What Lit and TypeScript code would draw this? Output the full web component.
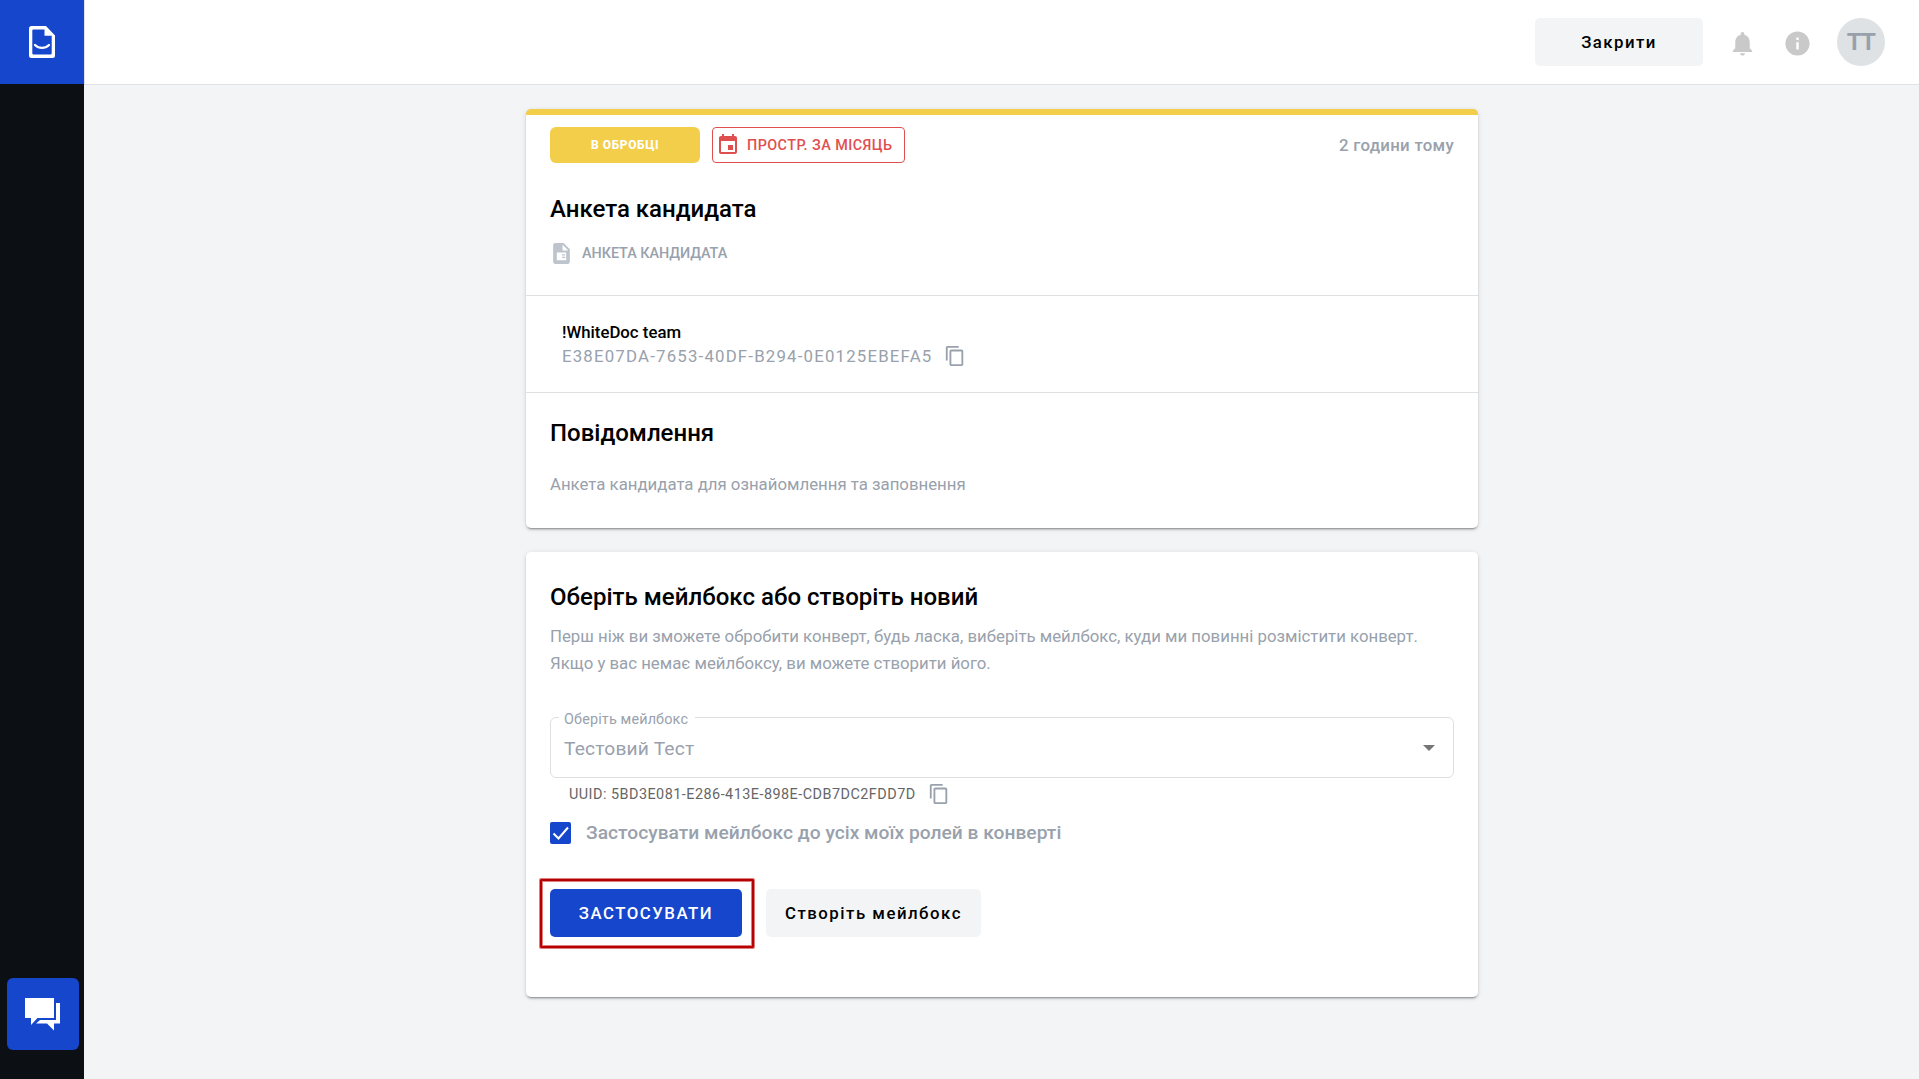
import { LitElement, html, css } from "lit";
import { customElement } from "lit/decorators.js";

@customElement("copy-icon")
class CopyIcon extends LitElement {
  static styles = css`
    :host { display: block; flex: none; width: 22px; height: 22px; color: #98a1ac; }
    svg { display: block; width: 100%; height: 100%; fill: currentColor; }
  `;
  render() {
    return html`<svg viewBox="0 0 24 24"><path d="M16 1H4c-1.1 0-2 .9-2 2v14h2V3h12V1zm3 4H8c-1.1 0-2 .9-2 2v14c0 1.1.9 2 2 2h11c1.1 0 2-.9 2-2V7c0-1.1-.9-2-2-2zm0 16H8V7h11v14z"/></svg>`;
  }
}

@customElement("side-bar")
class SideBar extends LitElement {
  static styles = css`
    :host { display: flex; flex-direction: column; justify-content: space-between; width: 84px; flex: none; background: #0c1014; }
    .logo { height: 84px; background: #1546cc; display: grid; place-items: center; }
    .logo svg { width: 26px; height: 32px; display: block; }
    .chat { width: 72px; height: 72px; margin: 0 0 29px 7px; border-radius: 6px; background: #1546cc; }
    .chat svg { width: 72px; height: 72px; display: block; }
  `;
  render() {
    return html`
      <div class="logo">
        <svg viewBox="0 0 26 32">
          <path fill="#fff" fill-rule="evenodd" d="M2.500 0H17l9 9.500v20a2.500 2.500 0 0 1-2.500 2.500h-21A2.500 2.500 0 0 1 0 29.500v-27A2.500 2.500 0 0 1 2.500 0zM4.500 3.400A1.200 1.200 0 0 0 3.300 4.600v22.600A1.200 1.200 0 0 0 4.500 28.400h17a1.200 1.200 0 0 0 1.200-1.200V9.800h-7.200V3.400z"/>
          <path fill="none" stroke="#fff" stroke-width="2.300" stroke-linecap="round" d="M6 19c4 3.900 10 3.900 14 0"/>
        </svg>
      </div>
      <div class="chat">
        <svg viewBox="0 0 72 72" fill="#fff">
          <path d="M18 20h29v20H30.500L24 47v-7h-6z"/>
          <path d="M49 25h4v20.500h-6V52.500L40 45.500H29l4-3.500h16z"/>
        </svg>
      </div>`;
  }
}

@customElement("top-bar")
class TopBar extends LitElement {
  static styles = css`
    :host { display: flex; align-items: center; justify-content: flex-end; box-sizing: border-box; height: 85px; padding-right: 34px; background: #fff; border-bottom: 1px solid #dee1e5; border-left: 1px solid #dee1e5; }
    .close { width: 168px; height: 48px; border-radius: 5px; background: #f3f4f6; font-size: 16.8px; font-weight: 500; letter-spacing: 1.45px; display: grid; place-items: center; color: #000; }
    .icon { width: 29px; height: 29px; fill: #c9c9c9; margin-top: 3px; }
    .bell { margin-left: 25px; }
    .info { margin-left: 26px; }
    .avatar { margin-left: 25px; width: 48px; height: 48px; border-radius: 50%; background: #dee2e5; color: #98a1ab; font-family: "Liberation Sans", sans-serif; font-size: 24px; font-weight: 700; letter-spacing: -.6px; display: grid; place-items: center; }
  `;
  render() {
    return html`
      <div class="close">Закрити</div>
      <svg class="icon bell" viewBox="0 0 24 24"><path d="M12 22c1.100 0 2-.9 2-2h-4c0 1.100.89 2 2 2zm6-6v-5c0-3.070-1.640-5.640-4.500-6.320V4c0-.83-.67-1.500-1.500-1.500s-1.500.67-1.500 1.500v.68C7.630 5.360 6 7.920 6 11v5l-2 2v1h16v-1l-2-2z"/></svg>
      <svg class="icon info" viewBox="0 0 24 24"><path d="M12 2C6.480 2 2 6.480 2 12s4.480 10 10 10 10-4.480 10-10S17.520 2 12 2zm1 15h-2v-6h2v6zm0-8h-2V7h2v2z"/></svg>
      <div class="avatar">TT</div>`;
  }
}

@customElement("envelope-card")
class EnvelopeCard extends LitElement {
  static styles = css`
    :host { display: block; box-sizing: border-box; height: 419px; border-radius: 5px; background: #fff; overflow: hidden; border-top: 6px solid #f3ce4a; box-shadow: 0 3px 1px -2px rgba(0,0,0,.2), 0 2px 2px rgba(0,0,0,.14), 0 1px 5px rgba(0,0,0,.12); }
    .head { padding: 12px 24px 0; height: 168px; border-bottom: 1px solid #dee1e3; }
    .chips { display: flex; align-items: center; gap: 12px; height: 36px; }
    .status { width: 150px; height: 36px; border-radius: 6px; background: #f3ce4a; color: #fff; font-size: 12px; font-weight: 800; letter-spacing: .6px; display: grid; place-items: center; }
    .due { box-sizing: border-box; width: 193px; height: 36px; border: 1px solid #e04f50; border-radius: 4px; color: #e04f50; display: flex; align-items: center; font-size: 14.4px; font-weight: 500; letter-spacing: .43px; padding-left: 3px; gap: 7px; }
    .due svg { width: 24px; height: 24px; fill: currentColor; }
    .ago { margin-left: auto; color: #98a1ac; font-size: 16.8px; font-weight: 500; letter-spacing: .3px; }
    .title { font-size: 24px; font-weight: 500; line-height: 30px; }
    .head .title { margin-top: 31px; }
    .kind { display: flex; align-items: center; gap: 8px; margin: 17px 0 0 -1px; height: 24px; color: #98a1ac; font-size: 14.4px; font-weight: 500; letter-spacing: -.05px; }
    .kind svg { width: 25px; height: 25px; fill: #bdc4cc; }
    .team { box-sizing: border-box; height: 97px; padding: 24px 36px 0; border-bottom: 1px solid #dee1e3; }
    .name { font-size: 16.8px; font-weight: 500; line-height: 24px; }
    .uuid { display: flex; align-items: center; gap: 12px; height: 24px; color: #98a1ac; font-size: 16.8px; letter-spacing: 1.2px; }
    .message { padding: 25px 24px 0; }
    .body { margin-top: 24px; line-height: 24px; font-size: 16.8px; color: #98a1ac; }
  `;
  render() {
    return html`
      <div class="head">
        <div class="chips">
          <div class="status">В ОБРОБЦІ</div>
          <div class="due">
            <svg viewBox="0 0 24 24"><path d="M17 12h-5v5h5v-5zM16 1v2H8V1H6v2H5c-1.110 0-1.990.9-1.990 2L3 19c0 1.100.89 2 2 2h14c1.100 0 2-.9 2-2V5c0-1.100-.9-2-2-2h-1V1h-2zm3 18H5V8h14v11z"/></svg>
            <span>ПРОСТР. ЗА МІСЯЦЬ</span>
          </div>
          <div class="ago">2 години тому</div>
        </div>
        <div class="title">Анкета кандидата</div>
        <div class="kind">
          <svg viewBox="0 0 24 24"><path fill-rule="evenodd" d="M6 2h8l6 6v12c0 1.100-.9 2-2 2H6c-1.100 0-2-.9-2-2V4c0-1.100.9-2 2-2zm7 1.500V9h5.500zM7.500 11v7.500h9V11zM12.500 12.700h3v1.200h-3zM12.500 15.200h3v1.200h-3z"/></svg>
          <span>АНКЕТА КАНДИДАТА</span>
        </div>
      </div>
      <div class="team">
        <div class="name">!WhiteDoc team</div>
        <div class="uuid"><span>E38E07DA-7653-40DF-B294-0E0125EBEFA5</span><copy-icon></copy-icon></div>
      </div>
      <div class="message">
        <div class="title">Повідомлення</div>
        <div class="body">Анкета кандидата для ознайомлення та заповнення</div>
      </div>`;
  }
}

@customElement("mailbox-card")
class MailboxCard extends LitElement {
  static styles = css`
    :host { display: block; box-sizing: border-box; height: 445px; padding: 30px 24px 0; border-radius: 5px; background: #fff; box-shadow: 0 3px 1px -2px rgba(0,0,0,.2), 0 2px 2px rgba(0,0,0,.14), 0 1px 5px rgba(0,0,0,.12); }
    .title { font-size: 24px; font-weight: 500; line-height: 30px; letter-spacing: .02px; }
    .text { margin-top: 11px; font-size: 16.8px; line-height: 27px; color: #98a1ac; white-space: nowrap; }
    .select { margin: 40px 0 0; position: relative; box-sizing: border-box; height: 61px; border: 1px solid #dedfe1; border-radius: 6px; display: flex; align-items: center; justify-content: space-between; padding: 0 18px 0 13px; color: #98a1ac; font-size: 19.2px; letter-spacing: .18px; }
    .value { padding-top: 2px; }
    .label { position: absolute; left: 8px; top: -8px; padding: 0 7px 0 5px; line-height: 20px; background: #fff; font-size: 14.4px; letter-spacing: .15px; }
    .arrow { width: 12px; height: 6px; fill: #757575; }
    .uuid { display: flex; align-items: center; gap: 12px; height: 22px; margin-top: 5px; padding-left: 19px; color: #666; font-size: 14.4px; letter-spacing: .48px; }
    .check { display: flex; align-items: center; gap: 15px; height: 24px; margin-top: 16px; color: #98a1ac; font-size: 19.2px; font-weight: 500; line-height: 22px; letter-spacing: .02px; }
    .box { width: 21px; height: 22px; border-radius: 2px; background: #1546cc; }
    .box svg { display: block; width: 21px; height: 22px; fill: none; stroke: #fff; stroke-width: 2; }
    .actions { display: flex; gap: 24px; margin-top: 44px; }
    .button { height: 48px; border-radius: 5px; display: grid; place-items: center; font-size: 16.8px; font-weight: 500; letter-spacing: 1.5px; }
    .apply { width: 192px; background: #1546cc; color: #fff; position: relative; }
    .apply::after { content: ""; position: absolute; inset: -10px -12px -11px -10px; border: 2px solid #b80000; box-shadow: 0 0 0 1px rgba(184,0,0,.5), inset 0 0 0 1px rgba(184,0,0,.5); border-radius: 1px; }
    .create { width: 215px; background: #f3f4f6; color: #000; }
  `;
  render() {
    return html`
      <div class="title">Оберіть мейлбокс або створіть новий</div>
      <div class="text">Перш ніж ви зможете обробити конверт, будь ласка, виберіть мейлбокс, куди ми повинні розмістити конверт.<br>Якщо у вас немає мейлбоксу, ви можете створити його.</div>
      <div class="select">
        <span class="label">Оберіть мейлбокс</span>
        <span class="value">Тестовий Тест</span>
        <svg class="arrow" viewBox="0 0 12 6"><path d="M0 0h12L6 6z"/></svg>
      </div>
      <div class="uuid"><span>UUID: 5BD3E081-E286-413E-898E-CDB7DC2FDD7D</span><copy-icon></copy-icon></div>
      <div class="check">
        <div class="box"><svg viewBox="0 0 21 22"><path d="M3.500 11.500l5 5L18 5.500"/></svg></div>
        <span class="caption">Застосувати мейлбокс до усіх моїх ролей в конверті</span>
      </div>
      <div class="actions">
        <div class="button apply">ЗАСТОСУВАТИ</div>
        <div class="button create">Створіть мейлбокс</div>
      </div>`;
  }
}

@customElement("app-root")
class AppRoot extends LitElement {
  static styles = css`
    :host { display: flex; width: 100%; height: 1079px; overflow: hidden; background: #f3f4f6; font-family: Roboto, "Liberation Sans", sans-serif; color: #000; }
    .main { flex: 1; display: flex; flex-direction: column; }
    .content { width: 952px; margin-left: 442px; padding-top: 24px; display: flex; flex-direction: column; gap: 24px; }
  `;
  render() {
    return html`
      <side-bar></side-bar>
      <div class="main">
        <top-bar></top-bar>
        <div class="content">
          <envelope-card></envelope-card>
          <mailbox-card></mailbox-card>
        </div>
      </div>`;
  }
}
